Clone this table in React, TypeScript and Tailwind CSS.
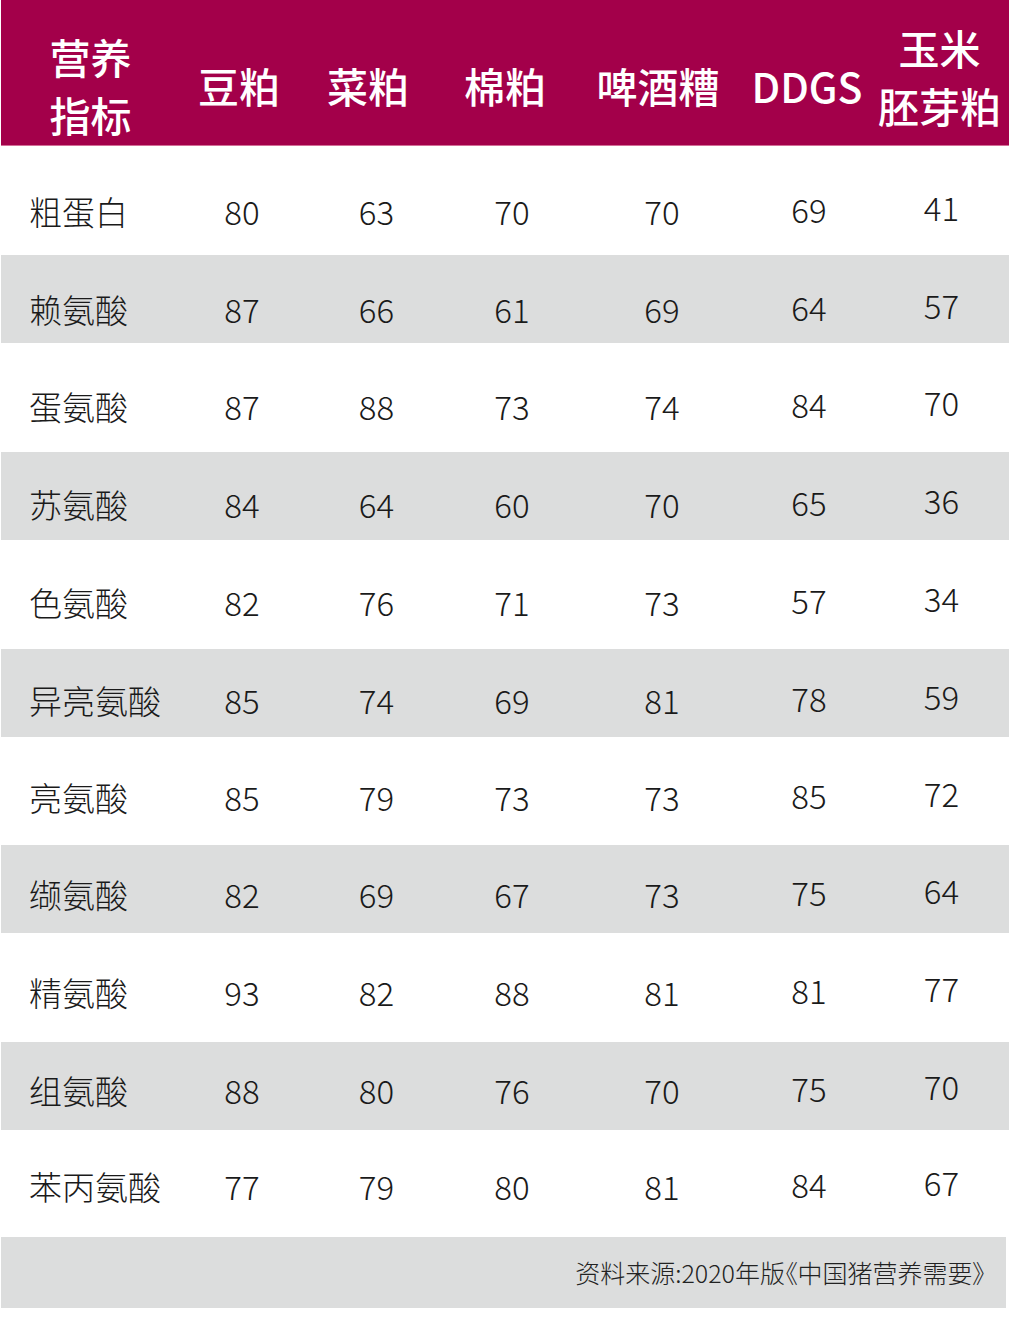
const headers = [
  { lines: ['营养', '指标'], shift: '' },
  { lines: ['豆粕'], shift: '' },
  { lines: ['菜粕'], shift: '' },
  { lines: ['棉粕'], shift: '' },
  { lines: ['啤酒糟'], shift: '' },
  { lines: ['DDGS'], shift: '' },
  { lines: ['玉米', '胚芽粕'], shift: '-translate-y-[9px]' },
];

// pad shifts the text a little further down in the upper rows, as in the source picture
const rows = [
  { name: '粗蛋白', values: [80, 63, 70, 70, 69, 41], h: 'h-[109px]', pad: 'pt-[22px]', gray: false },
  { name: '赖氨酸', values: [87, 66, 61, 69, 64, 57], h: 'h-[88px]', pad: 'pt-[21px]', gray: true },
  { name: '蛋氨酸', values: [87, 88, 73, 74, 84, 70], h: 'h-[109px]', pad: 'pt-[19px]', gray: false },
  { name: '苏氨酸', values: [84, 64, 60, 70, 65, 36], h: 'h-[88px]', pad: 'pt-[18px]', gray: true },
  { name: '色氨酸', values: [82, 76, 71, 73, 57, 34], h: 'h-[109px]', pad: 'pt-[16px]', gray: false },
  { name: '异亮氨酸', values: [85, 74, 69, 81, 78, 59], h: 'h-[88px]', pad: 'pt-[15px]', gray: true },
  { name: '亮氨酸', values: [85, 79, 73, 73, 85, 72], h: 'h-[108px]', pad: 'pt-[13px]', gray: false },
  { name: '缬氨酸', values: [82, 69, 67, 73, 75, 64], h: 'h-[88px]', pad: 'pt-[12px]', gray: true },
  { name: '精氨酸', values: [93, 82, 88, 81, 81, 77], h: 'h-[109px]', pad: 'pt-[10px]', gray: false },
  { name: '组氨酸', values: [88, 80, 76, 70, 75, 70], h: 'h-[88px]', pad: 'pt-[9px]', gray: true },
  { name: '苯丙氨酸', values: [77, 79, 80, 81, 84, 67], h: 'h-[107px]', pad: 'pt-[7px]', gray: false },
];

// the last two columns sit a touch higher in the source
const colShift = ['', '', '', '', '-translate-y-[2px]', '-translate-y-[4px]'];

export default function App() {
  return (
    <div
      className="w-[1009px] h-[1317px] bg-white pl-[1px]"
      style={{ fontFamily: '"Noto Sans CJK SC", "Noto Sans", sans-serif' }}
    >
      {/* Header */}
      <div className="h-[146px] pt-[24px] bg-[#a3004a] border-b border-[#d36e97] grid grid-cols-[179px_118px_140px_134px_172px_126px_139px] items-center text-white">
        {headers.map((h, i) => (
          <div
            key={i}
            className={`flex flex-col items-center justify-center text-[41px] font-medium leading-[58px] whitespace-nowrap ${h.shift}`}
          >
            {h.lines.map((l) => (
              <span key={l}>{l}</span>
            ))}
          </div>
        ))}
      </div>

      {/* Body rows */}
      {rows.map((r) => (
        <div
          key={r.name}
          className={`${r.h} ${r.pad} ${r.gray ? 'bg-[#dcdddd]' : 'bg-white'} grid grid-cols-[174px_134px_135px_136px_164px_130px_135px] items-center text-[#1a1a1a] text-[33px] font-light`}
        >
          <div className="pl-[28px] whitespace-nowrap">{r.name}</div>
          {r.values.map((v, i) => (
            <div key={i} className={`text-center ${colShift[i]}`}>
              {v}
            </div>
          ))}
        </div>
      ))}

      {/* Source note */}
      <div className="h-[71px] w-[1005px] bg-[#dcdddd] flex items-center justify-end pr-[21px] text-[25px] font-light text-[#222] [font-feature-settings:'palt']">
        资料来源:2020年版《中国猪营养需要》
      </div>
    </div>
  );
}
